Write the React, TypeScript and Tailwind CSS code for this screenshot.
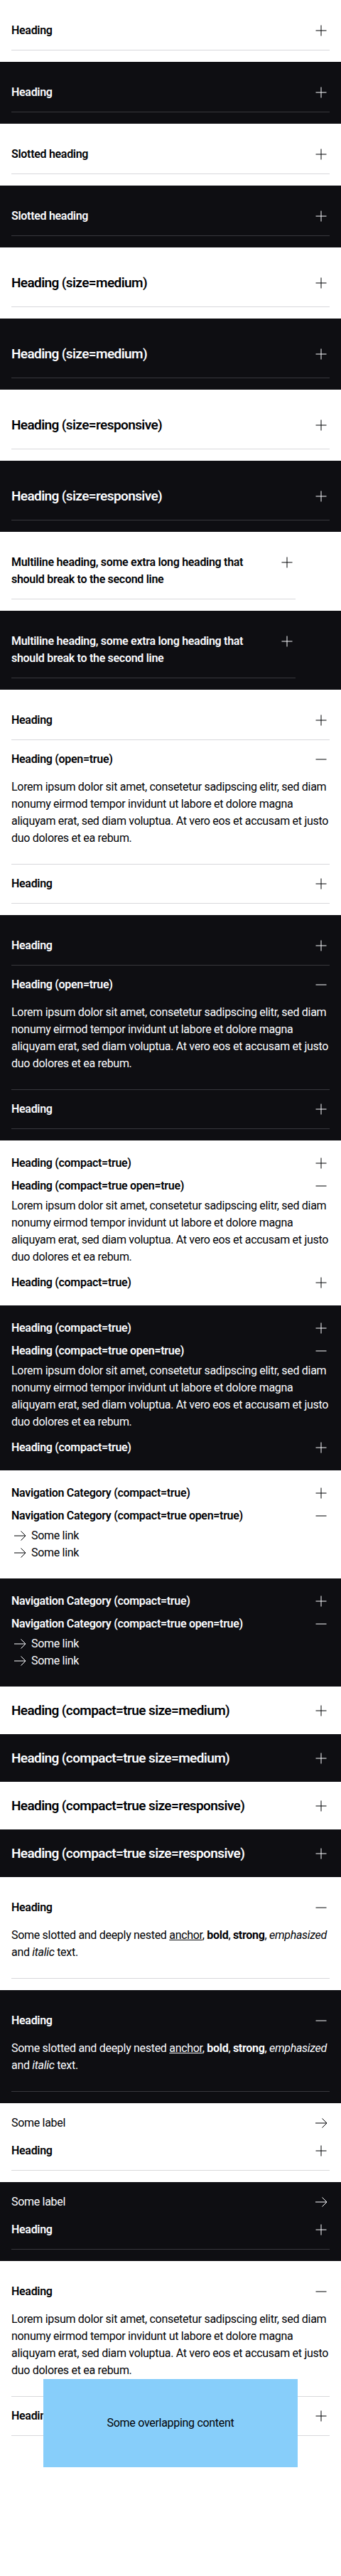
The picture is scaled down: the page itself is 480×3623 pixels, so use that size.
import React from "react";

type Theme = "light" | "dark";

const lorem =
  "Lorem ipsum dolor sit amet, consetetur sadipscing elitr, sed diam nonumy eirmod tempor invidunt ut labore et dolore magna aliquyam erat, sed diam voluptua. At vero eos et accusam et justo duo dolores et ea rebum.";

const PlusIcon: React.FC<{ open?: boolean }> = ({ open }) => (
  <svg viewBox="0 0 24 24" className="h-6 w-6 shrink-0" fill="none" stroke="currentColor" strokeWidth={1}>
    <path d="M4.5 12h15" />
    {!open && <path d="M12 4.5v15" />}
  </svg>
);

const ArrowIcon: React.FC = () => (
  <svg viewBox="0 0 24 24" className="h-6 w-6 shrink-0" fill="none" stroke="currentColor" strokeWidth={1}>
    <path d="M4 12h15.5" />
    <path d="M13.5 5.5L20 12l-6.5 6.5" />
  </svg>
);

const Section: React.FC<{ theme: Theme; className?: string; children: React.ReactNode }> = ({
  theme,
  className = "",
  children,
}) => (
  <section
    className={`p-4 ${
      theme === "dark" ? "bg-[#0e0e12] text-[#fbfcff]" : "bg-white text-[#010205]"
    } ${className}`}
  >
    {children}
  </section>
);

interface AccordionProps {
  heading: React.ReactNode;
  theme: Theme;
  size?: "small" | "medium";
  compact?: boolean;
  open?: boolean;
  className?: string;
  children?: React.ReactNode;
}

const Accordion: React.FC<AccordionProps> = ({
  heading,
  theme,
  size = "small",
  compact = false,
  open = false,
  className = "",
  children,
}) => {
  const medium = size === "medium";
  const border = compact ? "" : theme === "dark" ? "border-b border-[#38383d]" : "border-b border-[#d8d8db]";
  const pad = compact ? "py-1" : medium ? "py-5" : "py-[15px]";
  const type = medium
    ? "text-[19px] leading-[27px] tracking-[-0.6px]"
    : "text-base leading-6 tracking-[-0.3px]";

  return (
    <div className={`${border} ${className}`}>
      <div className={`flex items-start justify-between gap-6 ${pad}`}>
        <h2 className={`font-semibold ${type}`}>{heading}</h2>
        <span className={`flex items-center ${medium ? "h-[27px]" : "h-6"}`}>
          <PlusIcon open={open} />
        </span>
      </div>
      {open && (
        <div className={`text-base leading-6 tracking-[-0.3px] ${compact ? "pb-2" : "pb-6"}`}>{children}</div>
      )}
    </div>
  );
};

const Links: React.FC = () => (
  <div className="flex flex-col">
    {["Some link", "Some link"].map((l, i) => (
      <a key={i} href="#" className="flex items-center gap-1 text-base leading-6">
        <ArrowIcon />
        <span>{l}</span>
      </a>
    ))}
  </div>
);

const Slotted: React.FC = () => (
  <p>
    Some slotted and deeply nested <a href="#" className="underline">anchor</a>, <b>bold</b>,{" "}
    <strong>strong</strong>, <em>emphasized</em> and <i>italic</i> text.
  </p>
);

const App: React.FC = () => {
  const themes: Theme[] = ["light", "dark"];

  return (
    <div className="min-h-screen bg-white font-[Roboto,sans-serif] text-[#010205]">
      {themes.map((t) => (
        <Section key={`h-${t}`} theme={t}>
          <Accordion heading="Heading" theme={t} />
        </Section>
      ))}
      {themes.map((t) => (
        <Section key={`s-${t}`} theme={t}>
          <Accordion heading="Slotted heading" theme={t} />
        </Section>
      ))}
      {themes.map((t) => (
        <Section key={`m-${t}`} theme={t}>
          <Accordion heading="Heading (size=medium)" theme={t} size="medium" />
        </Section>
      ))}
      {themes.map((t) => (
        <Section key={`r-${t}`} theme={t}>
          <Accordion heading="Heading (size=responsive)" theme={t} size="medium" />
        </Section>
      ))}
      {themes.map((t) => (
        <Section key={`ml-${t}`} theme={t}>
          <Accordion
            heading="Multiline heading, some extra long heading that should break to the second line"
            theme={t}
            className="max-w-[400px]"
          />
        </Section>
      ))}
      {themes.map((t) => (
        <Section key={`o-${t}`} theme={t}>
          <Accordion heading="Heading" theme={t} />
          <Accordion heading="Heading (open=true)" theme={t} open>
            {lorem}
          </Accordion>
          <Accordion heading="Heading" theme={t} />
        </Section>
      ))}
      {themes.map((t) => (
        <Section key={`c-${t}`} theme={t}>
          <Accordion heading="Heading (compact=true)" theme={t} compact />
          <Accordion heading="Heading (compact=true open=true)" theme={t} compact open>
            {lorem}
          </Accordion>
          <Accordion heading="Heading (compact=true)" theme={t} compact />
        </Section>
      ))}
      {themes.map((t) => (
        <Section key={`n-${t}`} theme={t}>
          <Accordion heading="Navigation Category (compact=true)" theme={t} compact />
          <Accordion heading="Navigation Category (compact=true open=true)" theme={t} compact open>
            <Links />
          </Accordion>
        </Section>
      ))}
      {themes.map((t) => (
        <Section key={`cm-${t}`} theme={t}>
          <Accordion heading="Heading (compact=true size=medium)" theme={t} compact size="medium" />
        </Section>
      ))}
      {themes.map((t) => (
        <Section key={`cr-${t}`} theme={t}>
          <Accordion heading="Heading (compact=true size=responsive)" theme={t} compact size="medium" />
        </Section>
      ))}
      {themes.map((t) => (
        <Section key={`sl-${t}`} theme={t}>
          <Accordion heading="Heading" theme={t} open>
            <Slotted />
          </Accordion>
        </Section>
      ))}
      {themes.map((t) => (
        <Section key={`lb-${t}`} theme={t}>
          <a href="#" className="flex items-center justify-between text-base leading-6 tracking-[-0.3px]">
            <span>Some label</span>
            <ArrowIcon />
          </a>
          <Accordion heading="Heading" theme={t} />
        </Section>
      ))}
      <Section theme="light" className="relative">
        <Accordion heading="Heading" theme="light" open>
          {lorem}
        </Accordion>
        <Accordion heading="Heading" theme="light" />
        <div className="absolute left-1/2 top-[166px] flex h-[124px] w-[358px] -translate-x-1/2 items-center justify-center bg-[#87cefa] text-base leading-6 tracking-[-0.3px] text-[#010205]">
          Some overlapping content
        </div>
      </Section>
    </div>
  );
};

export default App;
